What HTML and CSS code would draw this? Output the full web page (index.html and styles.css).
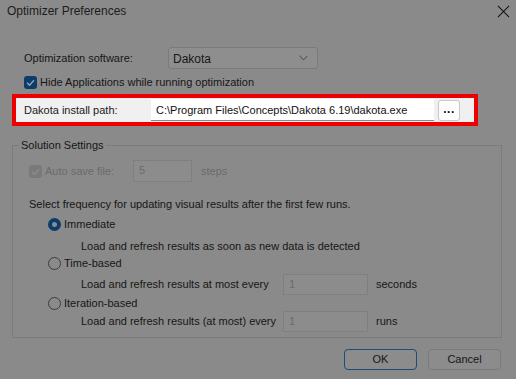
FILE: index.html
```html
<!DOCTYPE html>
<html lang="en">
<head>
    <meta charset="UTF-8">
    <meta name="viewport" content="width=device-width, initial-scale=1.0">
    <title>Optimizer Preferences</title>
    <link rel="stylesheet" href="styles.css">
</head>
<body>
    <div class="dialog">
        <!-- title bar -->
        <div class="titlebar">
            <span class="title">Optimizer Preferences</span>
            <svg class="close" viewBox="0 0 14 14">
                <path d="M1 1 L13 13 M13 1 L1 13"/>
            </svg>
        </div>

        <div class="row software">
            <span class="label-wide">Optimization software:</span>
            <div class="combo">
                <span>Dakota</span>
                <svg viewBox="0 0 10 6"><path d="M0.5 0.5 L5 5 L9.5 0.5"/></svg>
            </div>
        </div>

        <div class="row hide-apps">
            <span class="check on">
                <svg viewBox="0 0 13 13"><path d="M3 6.8 L5.5 9.2 L10 4.2"/></svg>
            </span>
            <span>Hide Applications while running optimization</span>
        </div>

        <!-- highlighted row -->
        <div class="highlight">
            <span class="path-label">Dakota install path:</span>
            <div class="path-input">C:\Program Files\Concepts\Dakota 6.19\dakota.exe</div>
            <div class="browse">...</div>
        </div>

        <fieldset class="group">
            <legend>Solution Settings</legend>

            <div class="row autosave">
                <span class="check disabled">
                    <svg viewBox="0 0 13 13"><path d="M3 6.8 L5.5 9.2 L10 4.2"/></svg>
                </span>
                <span class="autosave-label">Auto save file:</span>
                <div class="field small">5</div>
                <span class="unit">steps</span>
            </div>

            <div class="row note">Select frequency for updating visual results after the first few runs.</div>

            <div class="row option immediate">
                <span class="radio selected"></span>
                <span>Immediate</span>
            </div>
            <div class="row detail detected">Load and refresh results as soon as new data is detected</div>

            <div class="row option time">
                <span class="radio"></span>
                <span>Time-based</span>
            </div>
            <div class="row detail with-field every-sec">
                <span class="detail-text">Load and refresh results at most every</span>
                <div class="field wide">1</div>
                <span class="unit">seconds</span>
            </div>

            <div class="row option iter">
                <span class="radio"></span>
                <span>Iteration-based</span>
            </div>
            <div class="row detail with-field every-run">
                <span class="detail-text">Load and refresh results (at most) every</span>
                <div class="field wide">1</div>
                <span class="unit">runs</span>
            </div>
        </fieldset>

        <div class="buttons">
            <div class="btn default">OK</div>
            <div class="btn">Cancel</div>
        </div>
    </div>
</body>
</html>
```

FILE: styles.css
```css
body {
    margin: 0;
    font-family: "Liberation Sans", Arial, sans-serif;
    font-size: 11px;
    color: #161616;
    background-color: #8a8a8a; /* dimmed dialog */
}

.dialog {
    width: 516px;
    height: 379px;
    overflow: hidden;
}

.titlebar {
    height: 22px;
    display: flex;
    align-items: center;
    justify-content: space-between;
    padding: 0 6px 0 7px;
}

.title {
    font-size: 12px;
    color: #1c1c1c;
}

.close {
    width: 13px;
    height: 13px;
    fill: none;
    stroke: #111;
    stroke-width: 1.1;
}

.row {
    display: flex;
    align-items: center;
    height: 16px;
    white-space: nowrap;
}

.software {
    margin: 25px 0 0 24px;
    height: 22px;
}

.label-wide {
    width: 144px;
}

.combo {
    width: 135px;
    height: 20px;
    border: 1px solid #7b7b7b;
    border-radius: 3px;
    background-color: #8e8e8e;
    display: flex;
    align-items: center;
    justify-content: space-between;
    padding: 0 9px 0 4px;
    box-sizing: content-box;
}

.combo span {
    margin-top: 1px;
    font-size: 12px;
}

.combo svg {
    width: 9px;
    height: 6px;
    fill: none;
    stroke: #3a3a3a;
    stroke-width: 1;
}

.hide-apps {
    margin: 5px 0 0 24px;
}

.check {
    width: 13px;
    height: 13px;
    border-radius: 3px;
    display: inline-flex;
    margin-right: 3px;
    flex-shrink: 0;
}

.check svg {
    width: 13px;
    height: 13px;
    fill: none;
    stroke-width: 1.3;
}

.check.on {
    background-color: #0b3c6a;
}

.check.on svg {
    stroke: #8fa7bf;
}

.check.disabled {
    background-color: #7a7a7a;
}

.check.disabled svg {
    stroke: #8e8e8e;
}

/* the highlighted path row, not dimmed */
.highlight {
    margin: 4px 0 0 12px;
    height: 24px;
    width: 443px;
    border: 4px solid #ee0000;
    background-color: #f0f0f0;
    display: flex;
    align-items: center;
    padding: 0 7px 0 8px;
    box-sizing: content-box;
}

.path-label {
    width: 127px;
    color: #1a1a1a;
}

.path-input {
    width: 283px;
    height: 22px;
    line-height: 22px;
    background-color: #fff;
    border-bottom: 1px solid #8a8a8a;
    box-sizing: border-box;
    padding-left: 5px;
    color: #111;
    white-space: nowrap;
    overflow: hidden;
}

.browse {
    width: 20px;
    height: 19px;
    margin-left: 4px;
    border: 1px solid #c8c8c8;
    border-radius: 3px;
    background-color: #fdfdfd;
    text-align: center;
    line-height: 17px;
    font-size: 12px;
    font-weight: bold;
    letter-spacing: 0.5px;
    color: #111;
}

.group {
    margin: 11px 0 0 12px;
    width: 490px;
    box-sizing: border-box;
    border: 1px solid #7c7c7c;
    padding: 0 0 5px 0;
    min-width: 0;
}

.group legend {
    margin-left: 6px;
    padding: 0 2px;
    line-height: 16px;
    color: #161616;
}

.autosave {
    margin: 7px 0 0 16px;
    height: 22px;
    color: #6a6a6a;
}

.autosave-label {
    width: 88px;
}

.field {
    height: 20px;
    border: 1px solid #7f7f7f;
    background-color: #8c8c8c;
    box-sizing: content-box;
    padding-left: 5px;
    line-height: 18px;
    color: #6a6a6a;
}

.field.small {
    width: 52px;
}

.field.wide {
    width: 78px;
    height: 19px;
}

.unit {
    margin-left: 8px;
}

.autosave .unit {
    margin-left: 9px;
}

.note {
    margin: 14px 0 0 16px;
}

.option {
    margin-left: 35px;
}

.immediate {
    margin-top: 4px;
}

.radio {
    width: 11px;
    height: 11px;
    border: 1px solid #3c3c3c;
    border-radius: 50%;
    margin-right: 3px;
    box-sizing: content-box;
    flex-shrink: 0;
}

.radio.selected {
    width: 5px;
    height: 5px;
    border: 4px solid #0b3c6a;
    background-color: #8c8c8c;
}

.detail {
    margin-left: 68px;
}

.detected {
    margin-top: 6px;
}

.time {
    margin-top: 1px;
}

.with-field {
    height: 22px;
}

.detail-text {
    width: 202px;
}

.every-sec {
    margin-top: 2px;
}

.iter {
    margin-top: 0;
}

.every-run {
    margin-top: -1px;
}

.buttons {
    display: flex;
    justify-content: flex-end;
    gap: 11px;
    margin-top: 11px;
    padding-right: 15px;
}

.btn {
    width: 71px;
    height: 19px;
    border: 1px solid #7a7a7a;
    border-radius: 4px;
    background-color: #8c8c8c;
    text-align: center;
    line-height: 19px;
    color: #161616;
}

.btn.default {
    border-color: #1d4c78;
}
```
